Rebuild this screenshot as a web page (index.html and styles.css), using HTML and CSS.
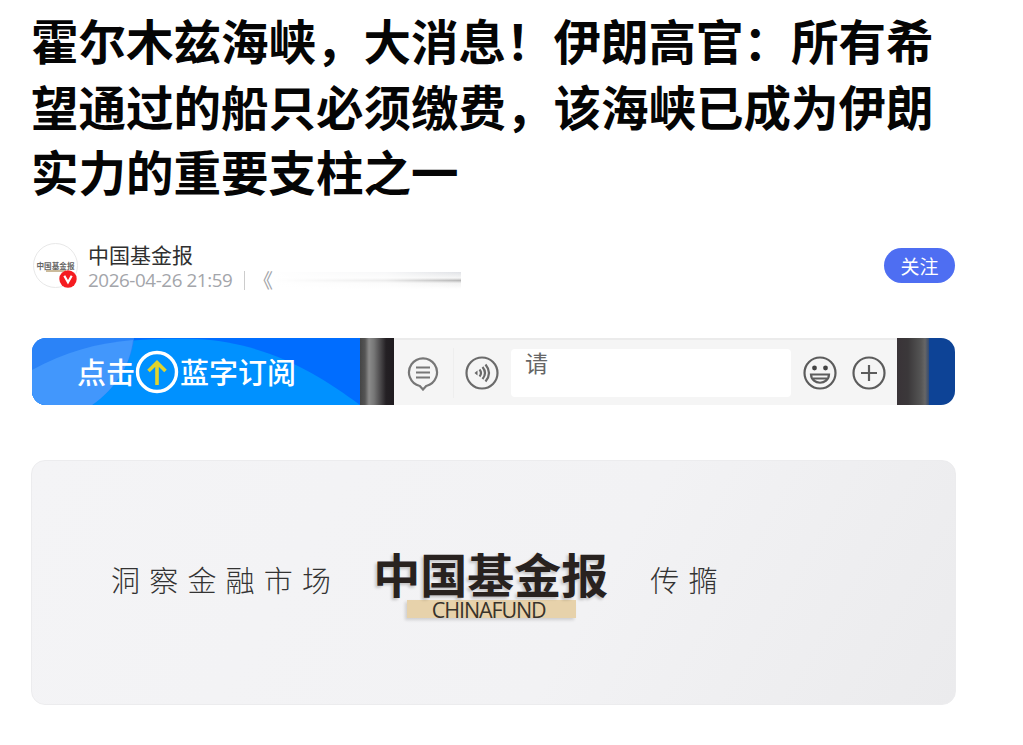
FILE: index.html
```html
<!DOCTYPE html>
<html lang="zh-CN">
<head>
<meta charset="UTF-8">
<title>中国基金报</title>
<link rel="stylesheet" href="styles.css">
</head>
<body>
<div class="article">
  <h1>霍尔木兹海峡，大消息！伊朗高官：所有希望通过的船只必须缴费，该海峡已成为伊朗实力的重要支柱之一</h1>

  <div class="meta">
    <div class="avatar">
      <span class="avatar-name">中国基金报</span>
      <span class="avatar-line"></span>
      <svg class="badge" viewBox="0 0 18 18"><circle cx="9" cy="9" r="8.7" fill="#f51c20"/><path d="M5.3 5.8L9 12.2l3.7-6.4" fill="none" stroke="#fff" stroke-width="2.2"/></svg>
    </div>
    <div class="info">
      <div class="name">中国基金报</div>
      <div class="sub">
        <span class="date">2026-04-26 21:59</span>
        <span class="sep"></span>
        <span class="quote">《</span>
        <span class="smear"></span>
      </div>
    </div>
    <button class="follow">关注</button>
  </div>

  <div class="banner">
    <div class="subscribe">
      <svg class="waves" viewBox="0 0 328 67" preserveAspectRatio="none">
        <rect width="328" height="67" fill="#006dff"/>
        <path d="M0 30C60 0 120 0 165 1C235 5 285 35 328 67H0z" fill="#0091ff"/>
        <path d="M0 0H102C99 27 84 50 60 67H0z" fill="#2b83f7"/>
        <path d="M0 32C32 14 65 5 101 2C98 28 83 51 60 67H0z" fill="#4297fc"/>
      </svg>
      <span class="sub-text">点击</span>
      <svg class="up" viewBox="0 0 44 44"><circle cx="22" cy="22" r="19.5" fill="none" stroke="#fff" stroke-width="3.4"/><path d="M22 35V13M13.500 21L22 12.500l8.500 8.500" fill="none" stroke="#e1d32d" stroke-width="3.6"/></svg>
      <span class="sub-text">蓝字订阅</span>
    </div>
    <div class="edge"></div>
    <div class="chat">
      <svg class="icon menu" viewBox="0 0 34 36"><path d="M13.800 31A14 14 0 1 1 20.200 31L17 34.500z" fill="none" stroke="#777" stroke-width="2.2"/><path d="M10 12.500h14M10 17.500h14M10 22.500h14" stroke="#777" stroke-width="2"/></svg>
      <span class="line"></span>
      <svg class="icon voice" viewBox="0 0 34 34"><g fill="none" stroke="#6b6b6b" stroke-width="2.2"><circle cx="17" cy="17" r="15.500"/><path d="M14.500 13.500q3 3.500 0 7M17.500 11q5 6 0 12M20.500 8.500q7 8.500 0 17"/></g><path d="M9.500 17l3-2.500v5z" fill="#666"/></svg>
      <div class="input">请</div>
      <svg class="icon smile" viewBox="0 0 34 34"><g fill="none" stroke="#5c5c5c" stroke-width="2.2"><circle cx="17" cy="17" r="15.500"/><path d="M8 18.500h18c-.5 11-17.500 11-18 0zM10 22.500h14"/></g><circle cx="11.500" cy="12" r="2.400" fill="#444"/><circle cx="22.500" cy="12" r="2.400" fill="#444"/></svg>
      <svg class="icon plus" viewBox="0 0 34 34"><g fill="none" stroke="#5c5c5c" stroke-width="2.2"><circle cx="17" cy="17" r="15.500"/><path d="M9 17h16M17 9v16"/></g></svg>
    </div>
    <div class="edge right"></div>
    <div class="end"></div>
  </div>

  <div class="card">
    <span class="slogan">洞察金融市场</span>
    <div class="logo">
      <div class="logo-cn">中国基金报</div>
      <div class="logo-en">CHINAFUND</div>
    </div>
    <span class="slogan">传撱</span>
  </div>
</div>
</body>
</html>
```
FILE: styles.css
```css
* { box-sizing: border-box; }
body { margin: 0; background: #fff; font-family: "Noto Sans CJK SC", sans-serif; }
.article { width: 924px; margin-left: 31px; padding-top: 7px; }
h1 { margin: 0; width: 905px; font-size: 47.5px; line-height: 65.7px; font-weight: 700; color: #050505; word-break: break-all; }

.meta { display: flex; align-items: flex-start; height: 48px; margin: 37px 0 0 2px; }
.avatar { position: relative; width: 45px; height: 45px; border: 1px solid #e8e8e8; border-radius: 50%; display: flex; flex-direction: column; align-items: center; padding-top: 17px; margin-top: 2px; }
.avatar-name { font-size: 7.6px; line-height: 9px; font-weight: 700; color: #666; white-space: nowrap; }
.avatar-line { width: 20px; height: 2px; background: #cbbb9c; }
.badge { position: absolute; right: 0; bottom: -1px; width: 18px; height: 18px; }
.info { margin-left: 10px; }
.name { font-size: 21px; line-height: 27px; color: #303030; }
.sub { display: flex; align-items: center; height: 24px; color: #a3a5aa; }
.date { width: 147px; font: 18.8px/24px "Open Sans", sans-serif; letter-spacing: -0.4px; white-space: nowrap; }
.sep { width: 1px; height: 19px; margin-left: 9px; background: #ccc; }
.quote { width: 20px; margin-left: 8px; font-size: 20px; line-height: 24px; text-align: right; }
.smear { width: 188px; height: 17px; background: linear-gradient(90deg, #fff, rgba(255,255,255,0.75) 60%, rgba(255,255,255,0)), linear-gradient(#e0e2e6, #f6f6f6 35%, #b8b8b8 50%, #f2f2f2 65%, #fff); }
.follow { width: 71px; height: 35px; margin: 7px 0 0 auto; padding: 0; border: 0; border-radius: 18px; background: #4e6ef2; color: #fff; font: 400 19px/35px "Noto Sans CJK SC", sans-serif; }

.banner { display: flex; height: 67px; margin: 49px 0 0 1px; border-radius: 14px; overflow: hidden; }
.subscribe { position: relative; display: flex; align-items: center; width: 328px; padding-left: 45px; color: #fff; }
.waves { position: absolute; left: 0; top: 0; width: 100%; height: 100%; }
.sub-text { position: relative; font-size: 29px; font-weight: 500; line-height: 67px; white-space: nowrap; }
.up { position: relative; width: 44px; height: 44px; margin: 0 1px 0 0; }
.edge { width: 34px; background: linear-gradient(90deg, #444 0, #555 5px, #8b8b8b 9px, #777 14px, #242024 26px, #1f1b1f); }
.edge.right { width: 32px; background: linear-gradient(90deg, #393337, #3b383a 11px, #555 24px, #666 28px, #344a70); }
.chat { display: flex; align-items: center; flex: 1; background: #f5f5f5; border-top: 2px solid #ebebeb; }
.icon { width: 34px; height: 34px; flex: none; }
.menu { height: 36px; margin-left: 12px; }
.line { width: 1px; height: 50px; margin: 0 11px 0 13px; background: #eee; }
.input { width: 280px; height: 48px; margin: 0 12px; padding-left: 14px; border-radius: 4px; background: #fff; color: #666; font-size: 23px; line-height: 27px; }
.plus { margin-left: 15px; }
.end { width: 26px; background: #0d4396; }

.card { display: flex; align-items: flex-start; width: 925px; height: 245px; margin-top: 55px; padding: 88px 0 0 79px; border: 1px solid #ececee; border-radius: 14px; background: linear-gradient(120deg, #f4f4f6, #f2f2f4 60%, #ebebed); }
.slogan { margin-top: 8px; font-size: 29px; line-height: 44px; font-weight: 300; letter-spacing: 9.2px; color: #333; white-space: nowrap; }
.logo { width: 240px; margin: 0 37px 0 33px; }
.logo-cn { font-size: 47px; line-height: 48px; height: 51px; font-weight: 700; color: #28221f; white-space: nowrap; text-shadow: -2px 2px 3px rgba(0,0,0,0.2); }
.logo-en { width: 169px; height: 18px; margin-left: 34px; padding-right: 6px; background: #e7d2ab; color: #38332b; font: 21.500px/19px "Open Sans", sans-serif; letter-spacing: -1.100px; text-align: center; box-shadow: -2px 2px 3px rgba(0,0,0,0.15); }
```
